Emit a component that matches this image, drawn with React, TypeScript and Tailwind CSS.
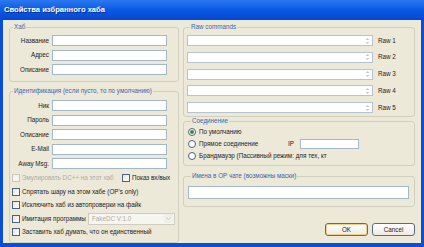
import React from "react";

const F = "font-['Liberation_Sans',Arial,sans-serif]";

function Legend({ children }: { children: React.ReactNode }) {
  return (
    <legend className="ml-[3px] px-[1px] text-[6.3px] leading-[8px] text-[#3f63a8]">{children}</legend>
  );
}

function Field({ label }: { label: string }) {
  return (
    <div className="flex items-center h-[11px]">
      <span className="w-[42px] shrink-0 pr-[3px] text-right text-[6.3px] leading-[8px] text-[#222]">{label}</span>
      <div className="flex-1 h-full bg-white border border-[#a4b6ca]" />
    </div>
  );
}

function Check({ disabled = false }: { disabled?: boolean }) {
  return (
    <span
      className={
        disabled
          ? "w-[8px] h-[8px] shrink-0 border border-[#cac8bb] bg-[#f5f4ef]"
          : "w-[8px] h-[8px] shrink-0 border border-[#4a6283] bg-gradient-to-br from-[#e6e5de] to-white"
      }
    />
  );
}

function Spin() {
  return (
    <svg width="5" height="8" viewBox="0 0 5 8" className="shrink-0">
      <path d="M2.5 1 L4.5 3 L0.5 3 Z" fill="#c9c9c9" />
      <path d="M2.5 7 L4.5 5 L0.5 5 Z" fill="#c9c9c9" />
    </svg>
  );
}

function RawRow({ n }: { n: number }) {
  return (
    <div className="flex items-center h-[11px]">
      <div className="w-[186px] h-full bg-white border border-[#b7c3d0] flex items-center justify-end pr-[2px]">
        <Spin />
      </div>
      <span className="ml-[5px] text-[6.3px] leading-[8px] text-[#222]">Raw {n}</span>
    </div>
  );
}

function Radio({ on = false }: { on?: boolean }) {
  return (
    <span className="w-[8px] h-[8px] shrink-0 rounded-full border border-[#4a6283] bg-white flex items-center justify-center">
      {on ? <span className="w-[4px] h-[4px] rounded-full bg-[#3b8a3b]" /> : null}
    </span>
  );
}

export default function App() {
  return (
    <div className={`${F} w-[424px] h-[247px] bg-[#0a4ed6] flex flex-col overflow-hidden`}>
      <div className="h-[20px] shrink-0 bg-gradient-to-b from-[#2b78f0] via-[#0a58e6] to-[#0548d2] flex items-center pl-[4px]">
        <span className="text-white font-bold text-[7.6px] leading-[10px] [text-shadow:1px_1px_0_#0a2c8a]">
          Свойства избранного хаба
        </span>
      </div>
      <div className="flex-1 mx-[3px] mb-[4px] bg-[#ece9d8] flex gap-[4px] pl-[6px] pr-[6px] pt-[3px]">
        {/* Left column */}
        <div className="w-[170px] flex flex-col">
          <fieldset className="border border-[#d0d0bf] rounded-[3px] pl-0 pr-[11px] pt-[4px] pb-[6px]">
            <Legend>Хаб</Legend>
            <div className="flex flex-col gap-[3.5px]">
              <Field label="Название" />
              <Field label="Адрес" />
              <Field label="Описание" />
            </div>
          </fieldset>
          <fieldset className="mt-[5px] border border-[#d0d0bf] rounded-[3px] pl-0 pr-[11px] pt-[5px] pb-[0px] flex-1">
            <Legend>Идентификация (если пусто, то по умолчанию)</Legend>
            <div className="flex flex-col gap-[3.5px]">
              <Field label="Ник" />
              <Field label="Пароль" />
              <Field label="Описание" />
              <Field label="E-Mail" />
              <Field label="Away Msg." />
            </div>
            <div className="mt-[2.5px] pl-[2px] -mr-[8px] flex flex-col text-[6.3px] leading-[8px] text-[#222]">
              <div className="h-[13.5px] flex items-center">
                <Check disabled />
                <span className="ml-[2px] w-[100px] whitespace-nowrap text-[#b0ad9e]">Эмулировать DC++ на этот хаб</span>
                <Check />
                <span className="ml-[2px]">Показ вх/вых</span>
              </div>
              <div className="h-[13.5px] flex items-center">
                <Check />
                <span className="ml-[2px]">Спрятать шару на этом хабе (OP's only)</span>
              </div>
              <div className="h-[13.5px] flex items-center">
                <Check />
                <span className="ml-[2px]">Исключить хаб из автопроверки на файк</span>
              </div>
              <div className="h-[13.5px] flex items-center">
                <Check />
                <span className="ml-[2px] w-[66px] whitespace-nowrap">Имитация программы</span>
                <div className="w-[87px] h-[12px] bg-[#f6f5f0] border border-[#cfcdc0] flex items-center justify-between pl-[3px] pr-[1px]">
                  <span className="text-[#b0ad9e]">FakeDC V:1.0</span>
                  <span className="w-[9px] h-[9px] bg-[#f0efea] flex items-center justify-center">
                    <svg width="5" height="3" viewBox="0 0 5 3">
                      <path d="M0.5 0.5 L2.5 2.5 L4.5 0.5" stroke="#c4c3bb" strokeWidth="1" fill="none" />
                    </svg>
                  </span>
                </div>
              </div>
              <div className="h-[13.5px] flex items-center">
                <Check />
                <span className="ml-[2px]">Заставить хаб думать, что он единственный</span>
              </div>
            </div>
          </fieldset>
        </div>

        {/* Right column */}
        <div className="w-[232px] flex flex-col">
          <fieldset className="border border-[#d0d0bf] rounded-[3px] pl-[3px] pt-[4px] pb-[3px]">
            <Legend>Raw commands</Legend>
            <div className="flex flex-col gap-[5.75px]">
              <RawRow n={1} />
              <RawRow n={2} />
              <RawRow n={3} />
              <RawRow n={4} />
              <RawRow n={5} />
            </div>
          </fieldset>
          <fieldset className="mt-[0px] border border-[#d0d0bf] rounded-[3px] pl-[4px] pt-[1px] pb-[3px]">
            <Legend>Соединение</Legend>
            <div className="flex flex-col text-[6.3px] leading-[8px] text-[#222]">
              <div className="h-[12px] flex items-center">
                <Radio on />
                <span className="ml-[3px]">По умолчанию</span>
              </div>
              <div className="h-[12px] flex items-center">
                <Radio />
                <span className="ml-[3px] w-[89px]">Прямое соединение</span>
                <span className="w-[12px]">IP</span>
                <div className="w-[59px] h-[10px] bg-white border border-[#a4b6ca]" />
              </div>
              <div className="h-[12px] flex items-center">
                <Radio />
                <span className="ml-[3px]">Брандмауэр (Пассивный режим: для тех, кт</span>
              </div>
            </div>
          </fieldset>
          <fieldset className="mt-[6px] border border-[#d0d0bf] rounded-[3px] pl-[4px] pr-[5px] pt-[6px] pb-[7px]">
            <Legend>Имена в OP чате (возможны маски)</Legend>
            <div className="h-[13px] bg-white border border-[#a4b6ca]" />
          </fieldset>
          <div className="mt-[16px] flex justify-end gap-[4px] text-[6.3px] leading-[8px] text-[#222]">
            <button className="w-[43px] h-[13px] rounded-[3px] border border-[#5c6b7e] bg-gradient-to-b from-white to-[#ecebe4] shadow-[inset_0_0_0_1px_#efd08a] flex items-center justify-center">
              OK
            </button>
            <button className="w-[43px] h-[13px] rounded-[3px] border border-[#5c6b7e] bg-gradient-to-b from-white to-[#ecebe4] flex items-center justify-center">
              Cancel
            </button>
          </div>
        </div>
      </div>
    </div>
  );
}
